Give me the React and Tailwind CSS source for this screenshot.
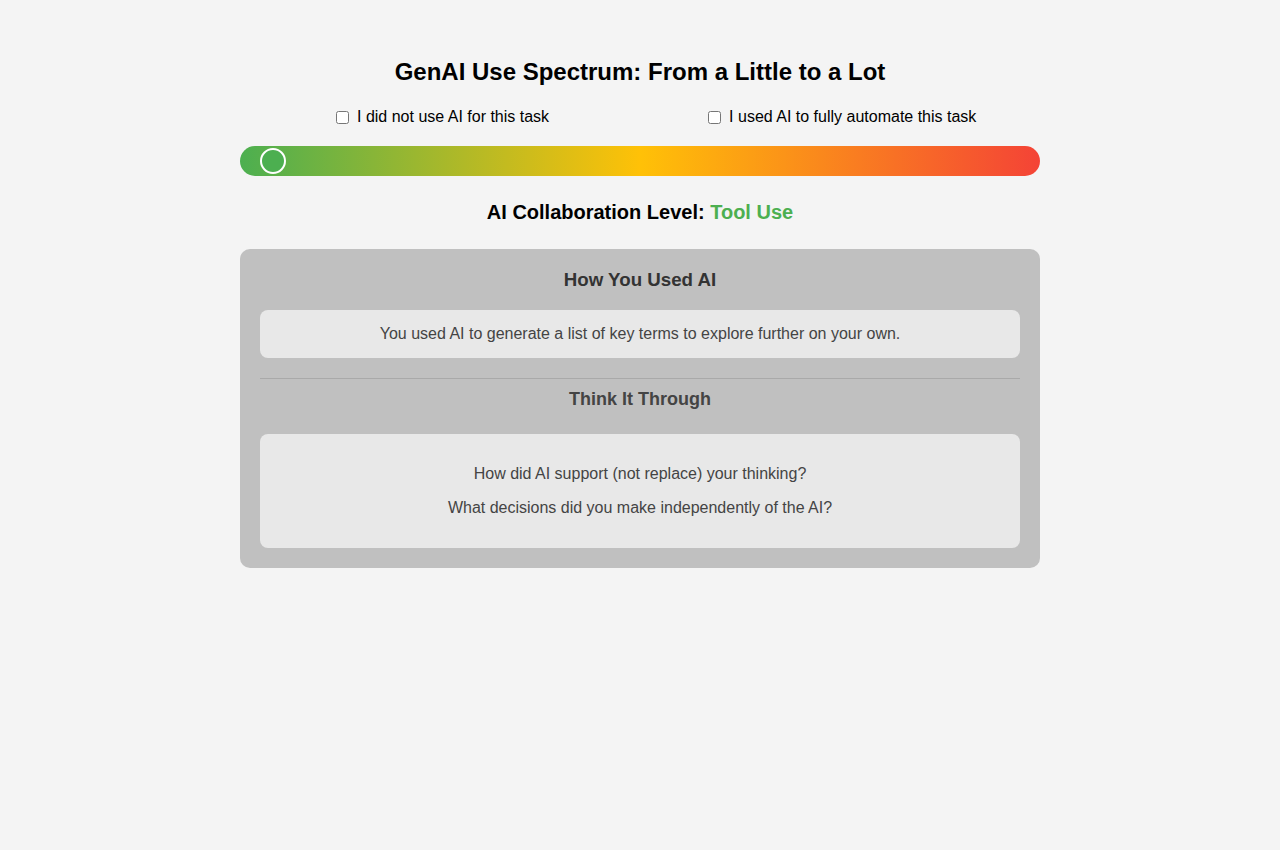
export default function App() {
  return (
    <div className="min-h-[850px] bg-[#f4f4f4] font-['Liberation_Sans',Arial,sans-serif] text-black">
      <div className="mx-auto w-[800px] pt-[58px]">

        <h1 className="text-center text-[24px] leading-[28px] font-bold">
          GenAI Use Spectrum: From a Little to a Lot
        </h1>

        <div className="mt-[22px] flex items-center pl-[96px] gap-[159px] text-[16px] leading-[18px]">
          <label className="flex items-center gap-2">
            <input type="checkbox" className="w-[13px] h-[13px]" />
            I did not use AI for this task
          </label>
          <label className="flex items-center gap-2">
            <input type="checkbox" className="w-[13px] h-[13px]" />
            I used AI to fully automate this task
          </label>
        </div>

        <div className="relative mt-[20px] h-[30px] rounded-full bg-[linear-gradient(to_right,#4caf50,#ffc107_50%,#f44336)]">
          <div className="absolute left-[20px] top-[2px] w-[26px] h-[26px] rounded-full border-2 border-white bg-[#4caf50]" />
        </div>

        <h2 className="mt-[24px] text-center text-[20px] leading-[24px] font-bold">
          AI Collaboration Level: <span className="text-[#4caf50]">Tool Use</span>
        </h2>

        <div className="mt-[25px] rounded-[10px] bg-[#c0c0c0] px-5 pt-5 pb-5">

          <h3 className="text-center text-[18.72px] leading-[22px] font-bold text-[#333]">
            How You Used AI
          </h3>

          <div className="mt-[19px] rounded-lg bg-[#e8e8e8] py-[15px] text-center text-[16px] leading-[18px] text-[#444]">
            You used AI to generate a list of key terms to explore further on your own.
          </div>

          <hr className="mt-5 border-t border-[#a9a9a9]" />

          <h3 className="mt-[9px] text-center text-[18px] leading-[22px] font-bold text-[#444]">
            Think It Through
          </h3>

          <div className="mt-[24px] flex flex-col gap-4 rounded-lg bg-[#e8e8e8] pt-[31px] pb-[31px] text-center text-[16px] leading-[18px] text-[#444]">
            <p>How did AI support (not replace) your thinking?</p>
            <p>What decisions did you make independently of the AI?</p>
          </div>

        </div>

      </div>
    </div>
  );
}
